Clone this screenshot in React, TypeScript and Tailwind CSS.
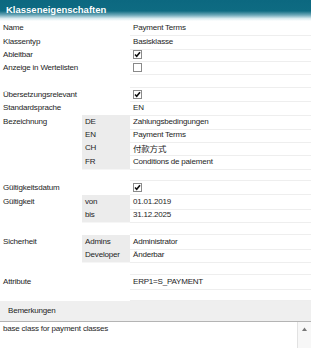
import React from "react";

type Row = {
  label?: string;
  sub?: string;
  value?: string;
  check?: boolean;
  cjk?: boolean;
};

const rows: Row[] = [
  { label: "Name", value: "Payment Terms" },
  { label: "Klassentyp", value: "Basisklasse" },
  { label: "Ableitbar", check: true },
  { label: "Anzeige in Wertelisten", check: false },
  {},
  { label: "Übersetzungsrelevant", check: true },
  { label: "Standardsprache", value: "EN" },
  { label: "Bezeichnung", sub: "DE", value: "Zahlungsbedingungen" },
  { sub: "EN", value: "Payment Terms" },
  { sub: "CH", value: "付款方式", cjk: true },
  { sub: "FR", value: "Conditions de paiement" },
  {},
  { label: "Gültigkeitsdatum", check: true },
  { label: "Gültigkeit", sub: "von", value: "01.01.2019" },
  { sub: "bis", value: "31.12.2025" },
  {},
  { label: "Sicherheit", sub: "Admins", value: "Administrator" },
  { sub: "Developer", value: "Änderbar" },
  {},
  { label: "Attribute", value: "ERP1=S_PAYMENT" },
  {},
];

function Checkbox({ checked }: { checked: boolean }) {
  return (
    <div className="w-[9px] h-[9px] border border-[#8a8a8a] bg-white flex items-center justify-center">
      {checked && (
        <svg width="7" height="7" viewBox="0 0 7 7">
          <path d="M1 3.5 L2.7 5.2 L6 1.2" stroke="#111" strokeWidth="1.6" fill="none" />
        </svg>
      )}
    </div>
  );
}

export default function App() {
  return (
    <div className="w-[311px] h-[348px] bg-white overflow-hidden flex flex-col text-[8px] tracking-[-0.2px] text-[#1e1e1e] font-['Liberation_Sans',Arial,sans-serif]">
      <div className="h-[21.33px] shrink-0 pl-[6px] pt-[4px] bg-[linear-gradient(to_bottom,#0c6880_0%,#0e6b82_52%,#6fa9b9_72%,#d8eaef_88%,#ffffff_100%)]">
        <span className="text-white font-bold text-[9.5px] tracking-normal leading-[12px]">Klasseneigenschaften</span>
      </div>

      <div className="flex flex-col">
        {rows.map((r, i) => (
          <div key={i} className="grid grid-cols-[82px_48px_1fr] h-[13.33px] leading-[14px]">
            <div className="pl-[3px] whitespace-nowrap">{r.label}</div>
            <div className={r.sub ? "pl-[3px] bg-[#ececec] border-b border-[#f6f6f6]" : ""}>{r.sub}</div>
            <div className="pl-[3px] border-b border-[#eeeeee] whitespace-nowrap flex items-center">
              {r.check !== undefined ? (
                <Checkbox checked={r.check} />
              ) : (
                <span className={r.cjk ? "font-['Noto_Sans_CJK_SC',sans-serif] text-[8.5px]" : ""}>{r.value}</span>
              )}
            </div>
          </div>
        ))}
      </div>

      <div className="h-[21px] shrink-0 bg-[#efefef] border-b border-[#b4b4b4] pl-[8px] flex items-center">
        Bemerkungen
      </div>

      <div className="flex-1 flex">
        <div className="flex-1 pl-[3px] pt-[1px] leading-[11px]">base class for payment classes</div>
        <div className="w-[14px] border-l border-[#e2e2e2] bg-[#f7f7f7] flex justify-center pt-[5px]">
          <svg width="5" height="4" viewBox="0 0 5 4">
            <path d="M0 4 L2.5 0.5 L5 4 Z" fill="#777" />
          </svg>
        </div>
      </div>
    </div>
  );
}
